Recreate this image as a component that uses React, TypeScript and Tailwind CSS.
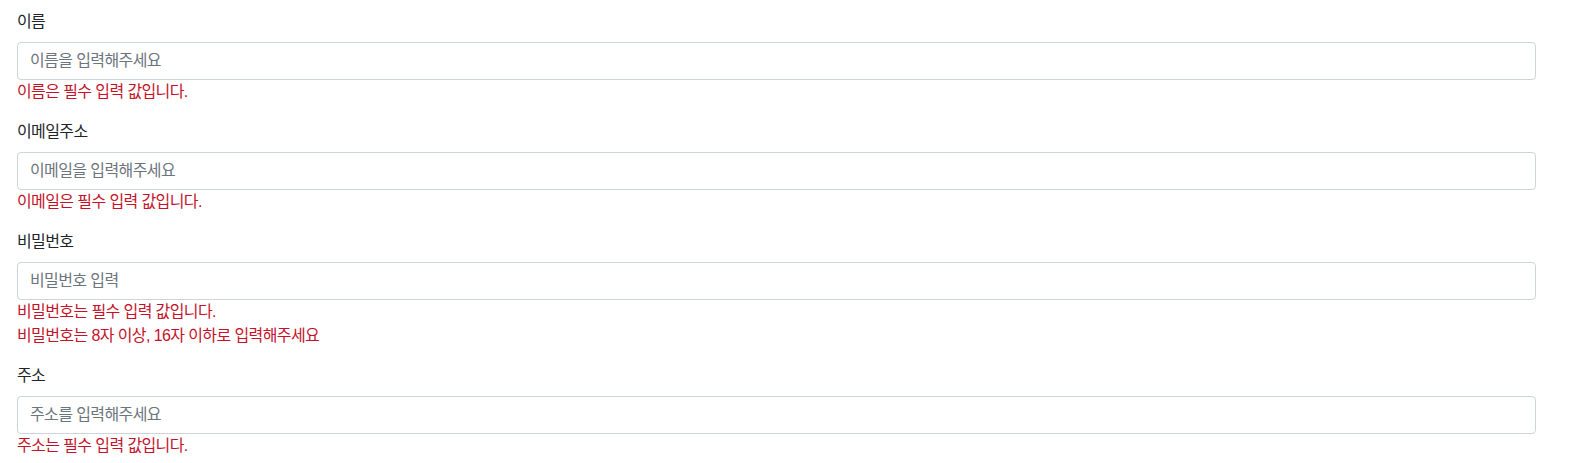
import React from "react";

const font = { fontFamily: '"Liberation Sans", "Noto Sans CJK KR", sans-serif', letterSpacing: "-0.6px" };

function Field({ label, placeholder, errors, type = "text" }: { label: string; placeholder: string; errors: string[]; type?: string }) {
  return (
    <div className="mb-4">
      <label className="block mb-2 text-[16px] leading-6 text-[#212529]">{label}</label>
      <input
        type={type}
        placeholder={placeholder}
        className="block w-full h-[38px] px-3 text-[16px] leading-6 text-[#212529] bg-white border border-[#ced4da] rounded-[4px] placeholder:text-[#6c757d] outline-none"
        style={font}
      />
      {errors.map((e, i) => (
        <div key={i} className="text-[16px] leading-6 text-[#c4122a]">{e}</div>
      ))}
    </div>
  );
}

export default function App() {
  return (
    <div className="bg-white min-h-[463px] pt-[10px] pl-[17px] pr-[33px]" style={font}>
      <Field label="이름" placeholder="이름을 입력해주세요" errors={["이름은 필수 입력 값입니다."]} />
      <Field label="이메일주소" placeholder="이메일을 입력해주세요" errors={["이메일은 필수 입력 값입니다."]} />
      <Field
        label="비밀번호"
        type="password"
        placeholder="비밀번호 입력"
        errors={["비밀번호는 필수 입력 값입니다.", "비밀번호는 8자 이상, 16자 이하로 입력해주세요"]}
      />
      <Field label="주소" placeholder="주소를 입력해주세요" errors={["주소는 필수 입력 값입니다."]} />
    </div>
  );
}
